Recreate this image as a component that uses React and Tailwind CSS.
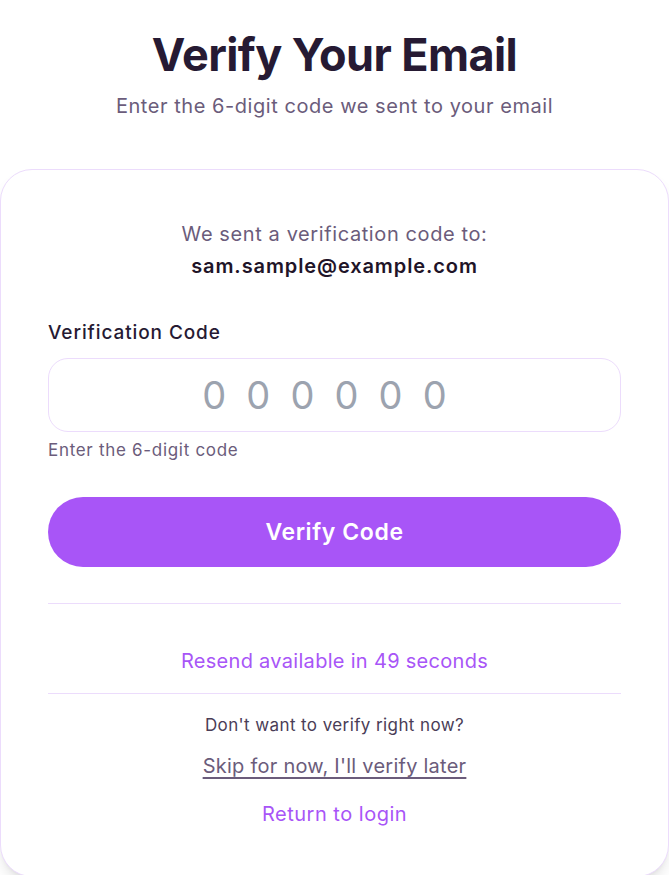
import React from "react";

const VerifyEmail = () => {
  return (
    <div
      className="min-h-screen bg-white overflow-hidden"
      style={{ fontFamily: "Inter, 'Noto Sans', sans-serif" }}
    >
      <div className="text-center pt-[27px]">
        <h1 className="text-[45px] leading-[56px] font-bold text-[#261a33] tracking-[-0.6px]">
          Verify Your Email
        </h1>
        <p className="mt-[9px] text-[20px] leading-[28px] text-[#6b5c7b] tracking-[0.55px]">
          Enter the 6-digit code we sent to your email
        </p>
      </div>

      <div className="mt-[49px] bg-white border border-[#ecdcfc] rounded-[32px] shadow-lg px-[47px] pt-[50px] pb-12">
        <div className="text-center">
          <p className="text-[20px] leading-[28px] text-[#6b5c7b] tracking-[0.6px]">
            We sent a verification code to:
          </p>
          <p className="mt-[4px] text-[20px] leading-[28px] font-semibold text-[#1f1428] tracking-[0.9px]">
            sam.sample@example.com
          </p>
        </div>

        {/* Code input */}
        <div className="mt-[39px]">
          <label
            className="block text-[19px] leading-[28px] font-medium text-[#261a33] tracking-[0.9px]"
            htmlFor="code"
          >
            Verification Code
          </label>
          <input
            id="code"
            type="text"
            maxLength={6}
            placeholder="000000"
            className="mt-[11px] w-full h-[74px] rounded-[20px] border border-[#ecdcfc] bg-white text-center text-[38px] tracking-[0.53em] text-[#261a33] placeholder:text-[#9ca3af] focus:outline-none"
          />
          <p className="mt-[6px] text-[17px] leading-[24px] text-[#6b5c7b] tracking-[0.7px]">
            Enter the 6-digit code
          </p>
        </div>

        <button
          type="button"
          className="mt-[35px] w-full h-[70px] rounded-full bg-[#a855f7] text-white text-[23px] font-semibold tracking-[0.6px]"
        >
          Verify Code
        </button>

        <div className="mt-[36px] border-t border-[#ecdcfc]" />

        <div className="pt-[43px] pb-[18px] text-center">
          <span className="text-[20px] leading-[28px] text-[#a855f7] tracking-[0.3px]">
            Resend available in 49 seconds
          </span>
        </div>

        <div className="border-t border-[#ecdcfc] pt-[18px] text-center">
          <p className="text-[17px] leading-[26px] text-[#4a3d57] tracking-[0.4px]">
            Don't want to verify right now?
          </p>
          <button
            type="button"
            className="mt-[14px] text-[20px] leading-[28px] text-[#6b5c7b] underline underline-offset-4 tracking-[0.25px]"
          >
            Skip for now, I'll verify later
          </button>
          <div className="mt-[20px]">
            <a href="#" className="text-[20px] leading-[28px] text-[#a855f7] tracking-[0.5px]">
              Return to login
            </a>
          </div>
        </div>
      </div>
    </div>
  );
};

export default function App() {
  return <VerifyEmail />;
}
